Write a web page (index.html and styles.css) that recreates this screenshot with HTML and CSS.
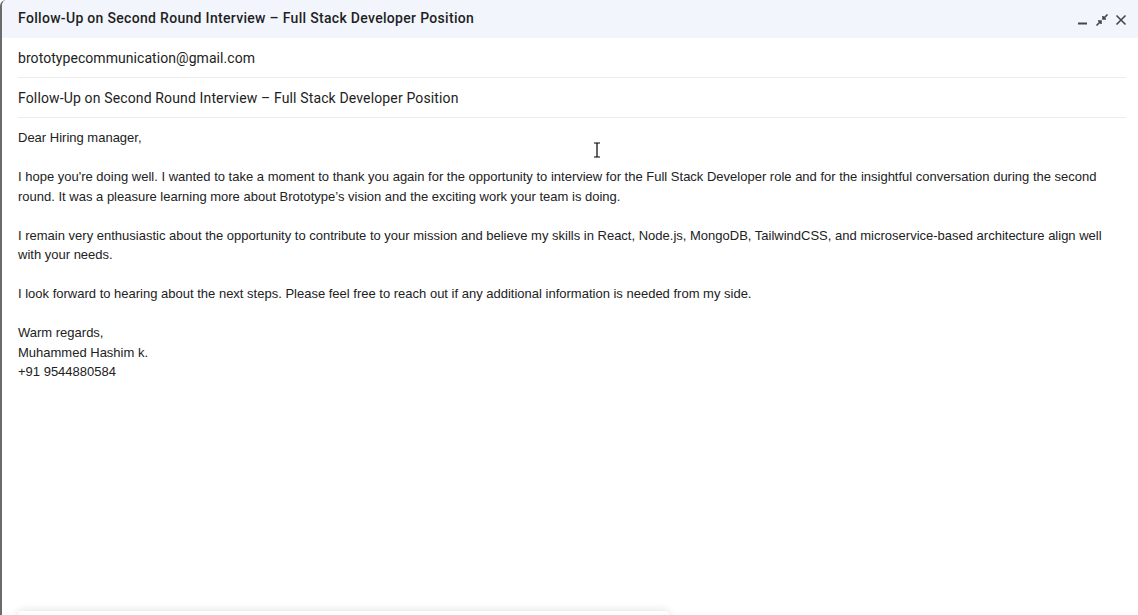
FILE: index.html
```html
<!DOCTYPE html>
<html>
<head>
<meta charset="utf-8">
<link rel="stylesheet" href="styles.css">
</head>
<body>
<div class="compose">
  <div class="header">
    <div class="title">Follow-Up on Second Round Interview – Full Stack Developer Position</div>
    <div class="actions">
      <svg class="ico" width="14" height="14" viewBox="0 0 14 14"><rect x="2" y="9.5" width="9" height="2" fill="#444746"/></svg>
      <svg class="ico" width="14" height="14" viewBox="0 0 14 14"><path d="M1.5 12.5 L6 8 M3 8 H6 V11 M12.5 1.5 L8 6 M8 3 V6 H11" stroke="#444746" stroke-width="1.6" fill="none"/></svg>
      <svg class="ico" width="14" height="14" viewBox="0 0 14 14"><path d="M2.5 2.5 L11.5 11.5 M11.5 2.5 L2.5 11.5" stroke="#444746" stroke-width="1.6" fill="none"/></svg>
    </div>
  </div>
  <div class="field to">brototypecommunication@gmail.com</div>
  <div class="field subject">Follow-Up on Second Round Interview – Full Stack Developer Position</div>
  <div class="body">
    <p>Dear Hiring manager,</p>
    <p>I hope you're doing well. I wanted to take a moment to thank you again for the opportunity to interview for the Full Stack Developer role and for the insightful conversation during the second round. It was a pleasure learning more about Brototype’s vision and the exciting work your team is doing.</p>
    <p>I remain very enthusiastic about the opportunity to contribute to your mission and believe my skills in React, Node.js, MongoDB, TailwindCSS, and microservice-based architecture align well with your needs.</p>
    <p>I look forward to hearing about the next steps. Please feel free to reach out if any additional information is needed from my side.</p>
    <p>Warm regards,<br>Muhammed Hashim k.<br>+91 9544880584</p>
  </div>
  <div class="toolbar"></div>
  <svg class="cursor" width="8" height="16" viewBox="0 0 8 16"><path d="M1 1 H7 M4 1 V15 M1 15 H7" stroke="#fff" stroke-width="3"/><path d="M1 1 H7 M4 1 V15 M1 15 H7" stroke="#000" stroke-width="1.2"/></svg>
</div>
</body>
</html>
```
FILE: styles.css
```css
html, body { margin: 0; padding: 0; background: #fff; }
body { width: 1138px; height: 615px; overflow: hidden; }
.compose {
  position: relative;
  height: 615px;
  border-left: 2px solid #6b6b6b;
  border-top-left-radius: 6px;
  box-sizing: border-box;
  background: #fff;
  display: flex;
  flex-direction: column;
}
.header {
  height: 38px;
  box-sizing: border-box;
  background: #f2f6fc;
  display: flex;
  align-items: center;
  justify-content: space-between;
  padding: 0 10px 2px 16px;
  border-top-left-radius: 6px;
}
.title {
  font-family: Roboto, "Liberation Sans", sans-serif;
  font-weight: 500;
  font-size: 14px;
  color: #1f1f1f;
  letter-spacing: 0.31px;
}
.actions { display: flex; gap: 5px; align-items: center; padding-top: 3px; }
.ico { display: block; }
.field {
  margin: 0 12px 0 16px;
  height: 40px;
  line-height: 40px;
  border-bottom: 1px solid #ececec;
  font-family: Roboto, "Liberation Sans", sans-serif;
  font-size: 14px;
  color: #222;
  box-sizing: border-box;
}
.field.to { letter-spacing: 0.06px; }
.field.subject { letter-spacing: 0.14px; }
.body {
  padding: 10px 12px 0 16px;
  font-family: "Liberation Sans", Arial, sans-serif;
  font-size: 13px;
  line-height: 19.5px;
  color: #222;
  flex: 1;
}
.body p { margin: 0 0 19.5px; }
.toolbar {
  position: absolute;
  left: 16px;
  bottom: -20px;
  width: 651px;
  height: 24px;
  background: #fff;
  border-radius: 4px;
  box-shadow: 0 0 8px rgba(0,0,0,0.15);
}
.cursor { position: absolute; left: 591px; top: 142px; }
```
